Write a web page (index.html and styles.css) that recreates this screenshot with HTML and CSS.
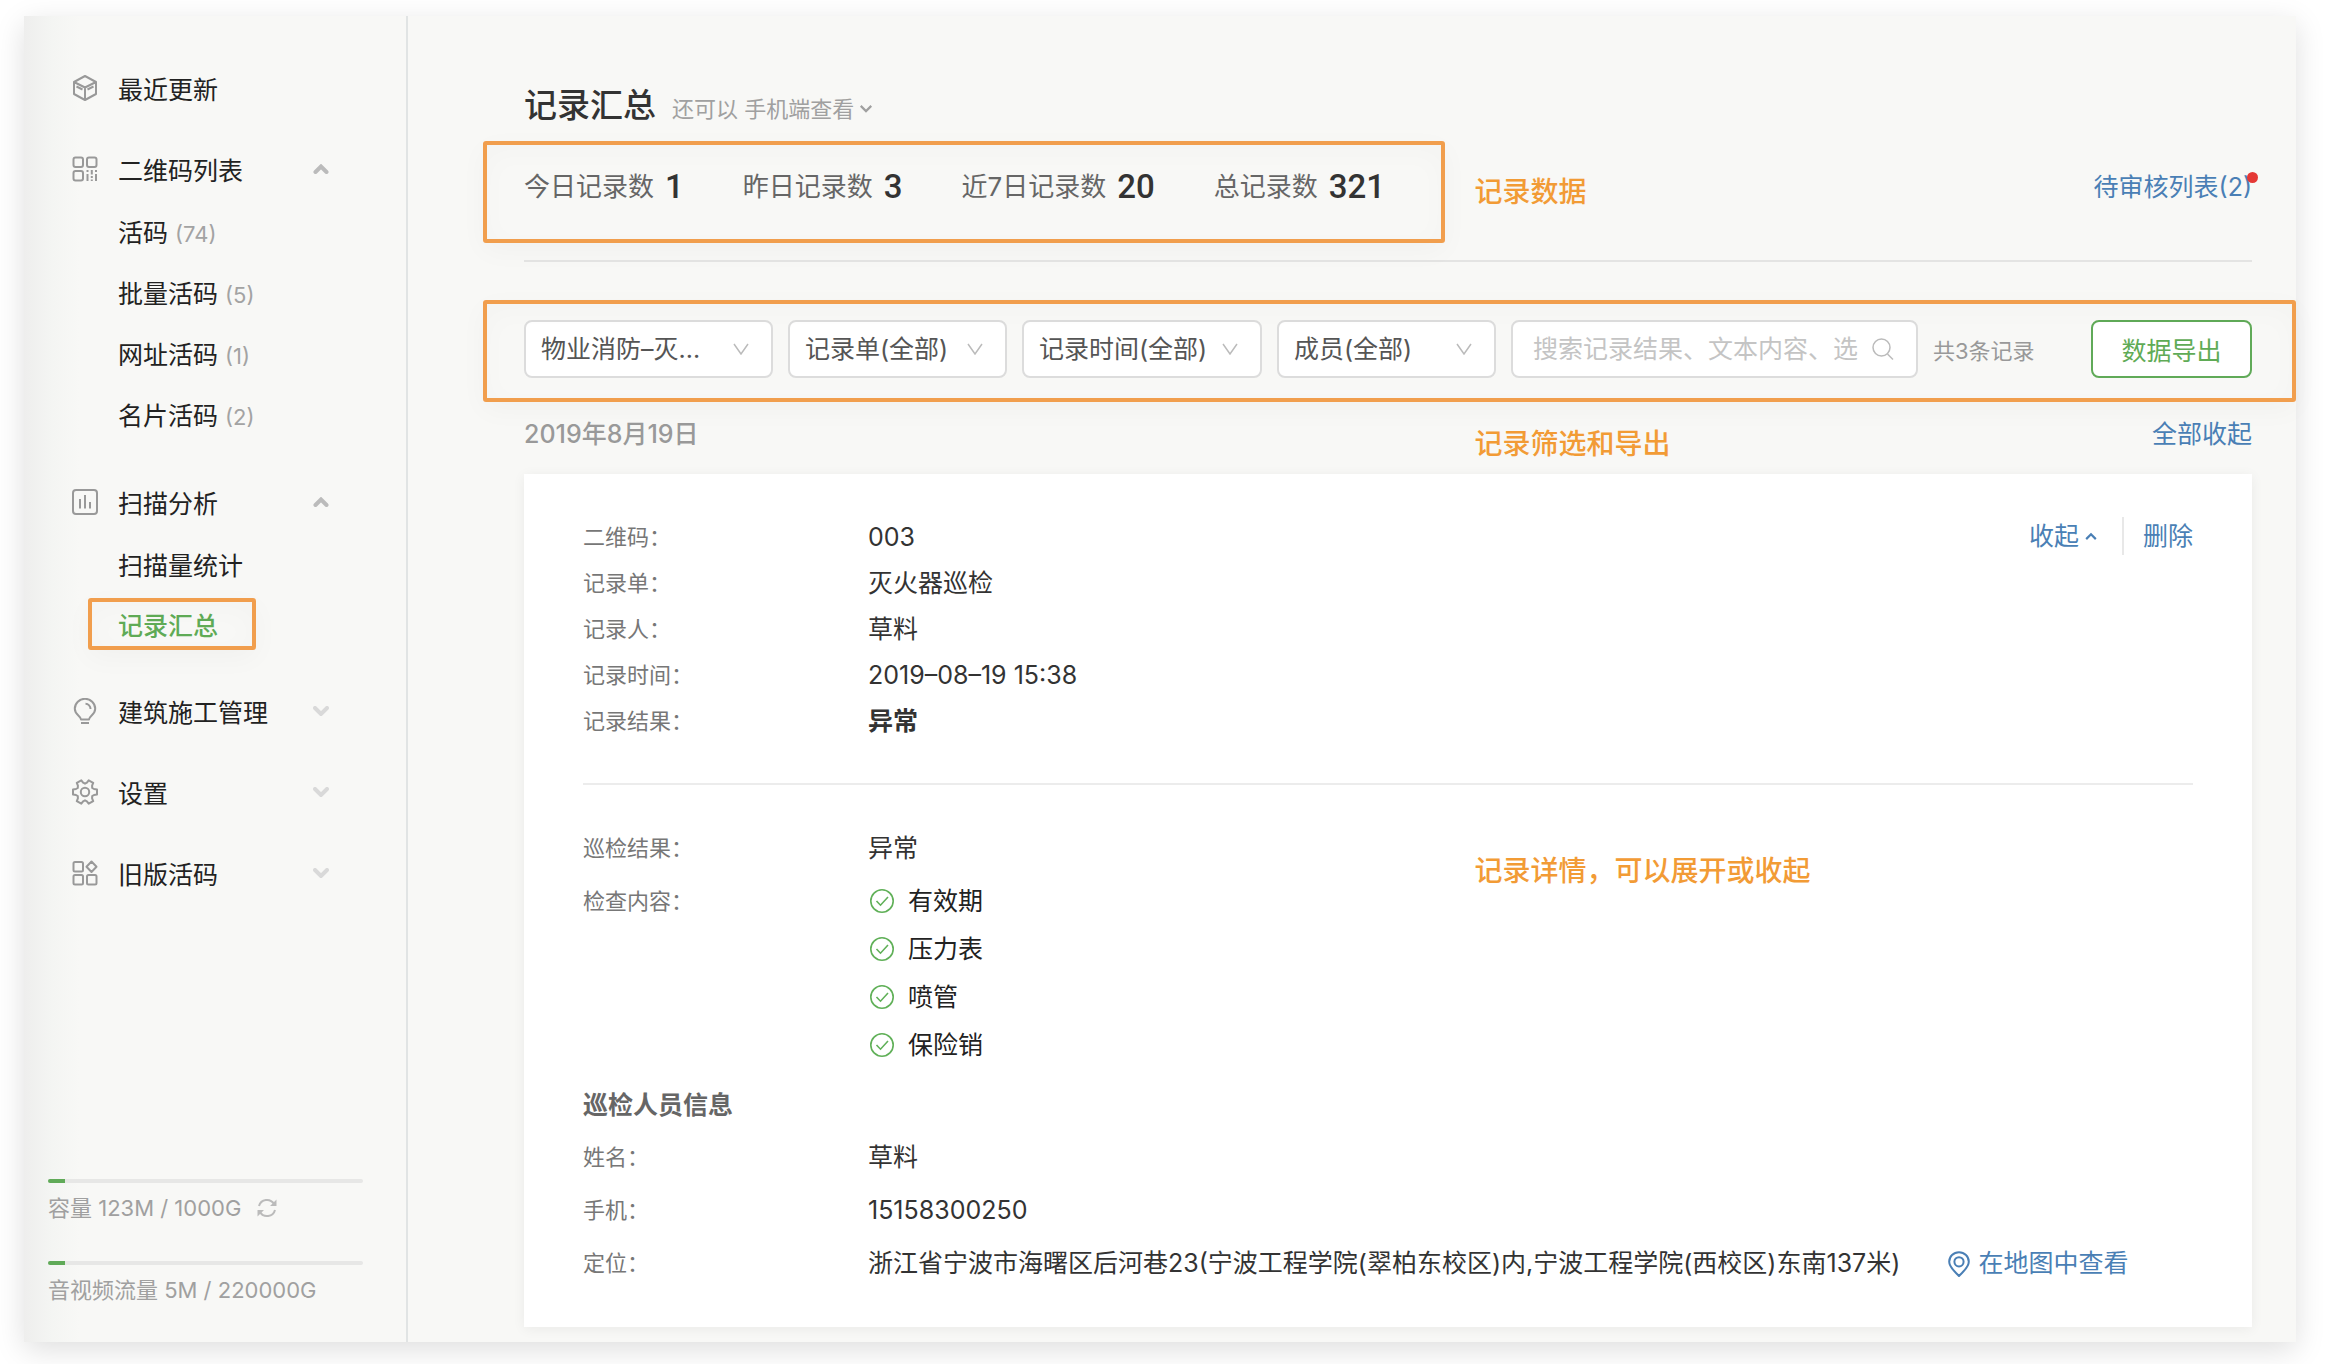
FILE: index.html
```html
<!DOCTYPE html>
<html lang="zh-CN">
<head>
    <meta charset="UTF-8">
    <meta name="viewport" content="width=device-width, initial-scale=1.0">
    <title>记录汇总</title>
    <link rel="stylesheet" href="styles.css">
</head>
<body>
<!-- 公用图标 -->
<svg class="sprite" aria-hidden="true">
    <symbol id="up" viewBox="0 0 16 10"><path d="M2.5 8L8 2.5L13.5 8"/></symbol>
    <symbol id="down" viewBox="0 0 16 10"><path d="M2 2L8 8L14 2"/></symbol>
    <symbol id="check" viewBox="0 0 24 24"><circle cx="12" cy="12" r="11.2"/><path d="M6.5 12L10.5 16.2L18 8"/></symbol>
</svg>

<div class="shell">
    <aside class="sidebar">
        <nav class="nav">
            <a class="nav-head" href="#">
                <svg class="nav-icon" viewBox="0 0 26 26"><path d="M13 1L24 7V19L13 25L2 19V7ZM2 7L13 12.5L24 7M13 12.5V25M4.5 11.5L10.5 14.5M15.5 14.5L21.5 11.5"/></svg>
                <span>最近更新</span>
            </a>
            <div>
                <a class="nav-head" href="#">
                    <svg class="nav-icon" viewBox="0 0 26 26"><rect x="1.5" y="1.5" width="9.5" height="9.5" rx="2"/><rect x="15" y="1.5" width="9.5" height="9.5" rx="2"/><rect x="1.5" y="15" width="9.5" height="9.5" rx="2"/><path d="M15.5 14V16M15.5 18V25M19.8 14V18.5M19.8 20V22M19.8 23.5V25M24 14V16M24 18V25"/></svg>
                    <span>二维码列表</span>
                    <svg class="arrow arrow-open"><use href="#up"/></svg>
                </a>
                <ul class="sub">
                    <li><a href="#">活码 <small>(74)</small></a></li>
                    <li><a href="#">批量活码 <small>(5)</small></a></li>
                    <li><a href="#">网址活码 <small>(1)</small></a></li>
                    <li><a href="#">名片活码 <small>(2)</small></a></li>
                </ul>
            </div>
            <div>
                <a class="nav-head" href="#">
                    <svg class="nav-icon" viewBox="0 0 26 26"><rect x="1" y="1" width="24" height="24" rx="3"/><path d="M8 10V19.5M13 6V19.5M18 13V19.5"/></svg>
                    <span>扫描分析</span>
                    <svg class="arrow arrow-open"><use href="#up"/></svg>
                </a>
                <ul class="sub">
                    <li><a href="#">扫描量统计</a></li>
                    <li class="current"><a href="#">记录汇总</a><i class="frame frame-nav"></i></li>
                </ul>
            </div>
            <a class="nav-head" href="#">
                <svg class="nav-icon" viewBox="0 0 26 26"><path d="M9 21.5C9 18 2.8 17 2.8 10.8A10.2 10 0 0 1 23.2 10.8C23.2 17 17 18 17 21.5ZM9 25H17M13.5 5.8A5 5 0 0 1 18.5 11"/></svg>
                <span>建筑施工管理</span>
                <svg class="arrow"><use href="#down"/></svg>
            </a>
            <a class="nav-head" href="#">
                <svg class="nav-icon" viewBox="-13 -13 26 26"><path d="M9 -3L12 -2.6V2.6L9 3L7.2 4.1L7.1 6.3L8.2 9.1L3.7 11.7L1.9 9.3L0 8.3L-1.9 9.3L-3.7 11.7L-8.2 9.1L-7.1 6.3L-7.2 4.1L-9 3L-12 2.6V-2.6L-9 -3L-7.2 -4.1L-7.1 -6.3L-8.2 -9.1L-3.7 -11.7L-1.9 -9.3L0 -8.3L1.9 -9.3L3.7 -11.7L8.2 -9.1L7.1 -6.3L7.2 -4.1Z"/><circle r="4.2"/></svg>
                <span>设置</span>
                <svg class="arrow"><use href="#down"/></svg>
            </a>
            <a class="nav-head" href="#">
                <svg class="nav-icon" viewBox="0 0 26 26"><rect x="1.5" y="2" width="9.5" height="9.5" rx="1.5"/><rect x="1.5" y="15" width="9.5" height="9.5" rx="1.5"/><rect x="15" y="15" width="9.5" height="9.5" rx="1.5"/><path d="M19.5 1.5L24.5 6.7L19.5 12L14.5 6.7Z"/></svg>
                <span>旧版活码</span>
                <svg class="arrow"><use href="#down"/></svg>
            </a>
        </nav>

        <div class="usage">
            <div>
                <div class="bar"><div class="bar-fill" style="width: 5.4%"></div></div>
                <p>容量 123M / 1000G
                    <button class="refresh" aria-label="刷新"><svg viewBox="0 0 20 20"><path d="M2 8A8.2 8.2 0 0 1 17 6M18 12A8.2 8.2 0 0 1 3 14"/><path class="tip" d="M19.5 1.5V8H13ZM.5 18.5V12H7Z"/></svg></button>
                </p>
            </div>
            <div>
                <div class="bar"><div class="bar-fill" style="width: 5.4%"></div></div>
                <p>音视频流量 5M / 220000G</p>
            </div>
        </div>
    </aside>

    <main class="main">
        <div class="title">
            <h1>记录汇总</h1>
            <a href="#">还可以 手机端查看<svg class="caret"><use href="#down"/></svg></a>
        </div>

        <div class="summary">
            <dl class="stats">
                <div><dt>今日记录数</dt><dd>1</dd></div>
                <div><dt>昨日记录数</dt><dd>3</dd></div>
                <div><dt>近7日记录数</dt><dd>20</dd></div>
                <div><dt>总记录数</dt><dd>321</dd></div>
                <i class="frame frame-stats"></i>
            </dl>
            <span class="note">记录数据</span>
            <a class="pending" href="#">待审核列表(2)</a>
        </div>

        <form class="filters">
            <select class="select-code" aria-label="二维码"><option>物业消防–灭...</option></select>
            <select class="select-form" aria-label="记录单"><option>记录单(全部)</option></select>
            <select class="select-time" aria-label="记录时间"><option>记录时间(全部)</option></select>
            <select class="select-member" aria-label="成员"><option>成员(全部)</option></select>
            <label class="search">
                <input type="text" placeholder="搜索记录结果、文本内容、选" aria-label="搜索">
                <svg viewBox="0 0 22 24"><circle cx="9.5" cy="10.5" r="8.5"/><path d="M15.5 17L21 22.5"/></svg>
            </label>
            <span class="count">共3条记录</span>
            <button class="export" type="button">数据导出</button>
            <i class="frame frame-filters"></i>
        </form>

        <div class="day">
            <h2>2019年8月19日</h2>
            <span class="note note-filter">记录筛选和导出</span>
            <a href="#">全部收起</a>
        </div>

        <section class="card">
            <div class="actions">
                <a href="#">收起<svg class="caret"><use href="#up"/></svg></a>
                <a class="delete" href="#">删除</a>
            </div>
            <dl class="info">
                <div><dt>二维码：</dt><dd>003</dd></div>
                <div><dt>记录单：</dt><dd>灭火器巡检</dd></div>
                <div><dt>记录人：</dt><dd>草料</dd></div>
                <div><dt>记录时间：</dt><dd>2019–08–19 15:38</dd></div>
                <div><dt>记录结果：</dt><dd><b>异常</b></dd></div>
            </dl>
            <div class="detail">
                <dl class="info info-loose">
                    <div><dt>巡检结果：</dt><dd>异常</dd></div>
                    <div>
                        <dt>检查内容：</dt>
                        <dd>
                            <ul class="checks">
                                <li><svg><use href="#check"/></svg>有效期</li>
                                <li><svg><use href="#check"/></svg>压力表</li>
                                <li><svg><use href="#check"/></svg>喷管</li>
                                <li><svg><use href="#check"/></svg>保险销</li>
                            </ul>
                        </dd>
                    </div>
                </dl>
                <h3>巡检人员信息</h3>
                <dl class="info info-loose">
                    <div><dt>姓名：</dt><dd>草料</dd></div>
                    <div><dt>手机：</dt><dd>15158300250</dd></div>
                    <div>
                        <dt>定位：</dt>
                        <dd class="place">浙江省宁波市海曙区后河巷23(宁波工程学院(翠柏东校区)内,宁波工程学院(西校区)东南137米)
                            <a href="#"><svg viewBox="0 0 22 26"><path d="M11 1.2C5.5 1.2 1.2 5.5 1.2 10.7C1.2 16.5 7 20.5 11 25C15 20.5 20.8 16.5 20.8 10.7C20.8 5.5 16.5 1.2 11 1.2Z"/><circle cx="11" cy="10.8" r="4.6"/></svg>在地图中查看</a>
                        </dd>
                    </div>
                </dl>
                <span class="note note-detail">记录详情，可以展开或收起</span>
            </div>
        </section>
    </main>
</div>
</body>
</html>
```
FILE: styles.css
```css
* {
    box-sizing: border-box;
}
body {
    display: flex;
    min-height: 100vh;
    margin: 0;
    padding: 16px 32px 23px 24px;
    background: #fff;
    color: #333;
    font-family: Inter, "Noto Sans CJK SC", sans-serif;
    font-size: 25px;
}
h1, h2, h3, p, ul, dl, dd {
    margin: 0;
    padding: 0;
}
ul {
    list-style: none;
}
a {
    color: #4a7fb5;
    text-decoration: none;
}
button, input, select {
    font-family: inherit;
    font-size: 25px;
}
svg {
    flex: none;
    fill: none;
    stroke: currentColor;
    stroke-width: 2;
}
.sprite {
    position: absolute;
    width: 0;
    height: 0;
}
.shell {
    display: flex;
    flex: 1;
    background: #f8f8f6;
    box-shadow: 0 8px 28px rgba(0, 0, 0, 0.13);
}

/* 左侧菜单 */
.sidebar {
    display: flex;
    flex-direction: column;
    flex: none;
    width: 384px;
    padding: 51px 43px 35px 24px;
    border-right: 2px solid #e1e4e4;
    background: linear-gradient(to right, #eeeeed, #f4f5f3 28px, #f8f8f6 56px);
}
.nav {
    display: flex;
    flex-direction: column;
    gap: 40px;
    padding: 0 34px 0 24px;
}
.nav-head {
    display: flex;
    align-items: center;
    height: 41px;
    color: #222;
}
.nav-icon {
    width: 26px;
    height: 26px;
    margin-right: 20px;
    color: #999;
    stroke-linejoin: round;
}
.arrow {
    width: 16px;
    height: 10px;
    margin-left: auto;
    color: #d9d9d9;
    stroke-width: 4;
    stroke-linecap: round;
}
.arrow-open {
    color: #bbb;
}
.sub {
    display: grid;
    gap: 12px;
    margin-top: 20px;
    padding-left: 46px;
}
.sub li {
    position: relative;
    line-height: 48px;
}
.sub a {
    color: #222;
}
.sub small {
    color: #a3a3a3;
    font-size: 22px;
}
.sub .current a {
    color: #5fab56;
    font-weight: 500;
}
.usage {
    display: grid;
    gap: 36px;
    margin-top: auto;
    color: #a0a0a0;
    font-size: 22px;
}
.usage p {
    display: flex;
    align-items: center;
    gap: 16px;
    margin-top: 8px;
    line-height: 34px;
}
.bar {
    height: 4px;
    overflow: hidden;
    border-radius: 2px;
    background: #e7e7e6;
}
.bar-fill {
    height: 4px;
    background: #60aa58;
}
.refresh {
    display: flex;
    padding: 0;
    border: 0;
    background: none;
    color: #bbb;
}
.refresh svg {
    width: 20px;
    height: 20px;
}
.refresh .tip {
    fill: currentColor;
    stroke: none;
}

/* 标注框和说明文字 */
.frame {
    position: absolute;
    border: 4px solid #f19e4d;
    border-radius: 3px;
    box-shadow: 0 8px 28px rgba(0, 0, 0, 0.03), inset 0 8px 28px rgba(0, 0, 0, 0.02);
    pointer-events: none;
}
.frame-nav {
    top: -4px;
    bottom: 0;
    left: -30px;
    width: 168px;
}
.frame-stats {
    inset: -21px -60px -31px -41px;
}
.frame-filters {
    inset: -20px -44px -24px -41px;
}
.note {
    position: absolute;
    left: 55%;
    color: #f29b35;
    font-size: 28px;
    font-weight: 500;
    line-height: 40px;
}

/* 右侧内容 */
.main {
    flex: 1;
    min-width: 0;
    padding: 65px 44px 15px 116px;
}
.title {
    display: flex;
    align-items: baseline;
    gap: 16px;
    line-height: 48px;
}
.title h1 {
    font-size: 33px;
    font-weight: 500;
}
.title a {
    color: #a0a0a0;
    font-size: 22px;
}
.caret {
    width: 14px;
    height: 9px;
    margin-left: 5px;
    vertical-align: 4px;
    stroke-width: 2.5;
}
.summary {
    position: relative;
    display: flex;
    justify-content: space-between;
    margin-top: 29px;
    padding-bottom: 48px;
    border-bottom: 2px solid #e4e4e3;
    line-height: 50px;
}
.summary .note {
    top: 10px;
}
.stats {
    position: relative;
    display: flex;
    gap: 59px;
}
.stats div {
    display: flex;
    gap: 11px;
}
.stats dt {
    color: #666;
    font-size: 26px;
}
.stats dd {
    font-family: Roboto, sans-serif;
    font-size: 33px;
    font-weight: 500;
}
.pending {
    position: relative;
}
.pending::after {
    content: "";
    position: absolute;
    top: 10px;
    right: -6px;
    width: 11px;
    height: 11px;
    border-radius: 50%;
    background: #e53935;
}
.filters {
    position: relative;
    display: flex;
    align-items: center;
    gap: 15px;
    margin-top: 58px;
}
.filters select, .search, .export {
    height: 58px;
    border: 2px solid #dcdcdc;
    border-radius: 8px;
    background-color: #fff;
}
.filters select {
    flex: none;
    appearance: none;
    padding: 0 44px 0 15px;
    background-image: url("data:image/svg+xml,%3Csvg xmlns='http://www.w3.org/2000/svg' width='16' height='12'%3E%3Cpath d='M1 1L8 11L15 1' fill='none' stroke='%23bbb' stroke-width='1.5'/%3E%3C/svg%3E");
    background-repeat: no-repeat;
    background-position: right 22px center;
    color: #555;
}
.filters .select-code {
    width: 249px;
}
.filters .select-form, .filters .select-member {
    width: 219px;
}
.filters .select-time {
    width: 240px;
}
.search {
    display: flex;
    align-items: center;
    gap: 10px;
    flex: 0 1 407px;
    min-width: 0;
    padding: 0 22px 0 20px;
    color: #bbb;
}
.search input {
    flex: 1;
    min-width: 0;
    padding: 0;
    border: 0;
    outline: 0;
    background: none;
}
.search input::placeholder {
    color: #c4c4c4;
}
.search svg {
    width: 22px;
    height: 24px;
    stroke-width: 1.5;
}
.count {
    color: #999;
    font-size: 22px;
    white-space: nowrap;
}
.export {
    flex: none;
    width: 161px;
    margin-left: auto;
    border-color: #60aa58;
    color: #5fab56;
}
.day {
    position: relative;
    display: flex;
    justify-content: space-between;
    margin: 36px 0 20px;
    line-height: 40px;
}
.day h2 {
    color: #999;
    font-size: 25px;
    font-weight: 500;
}
.note-filter {
    top: 10px;
}

/* 记录卡片 */
.card {
    position: relative;
    padding: 40px 59px 37px;
    background: #fff;
    box-shadow: 0 2px 12px rgba(0, 0, 0, 0.06);
}
.actions {
    position: absolute;
    top: 43px;
    right: 59px;
    display: flex;
    line-height: 38px;
}
.delete {
    margin-left: 24px;
    padding-left: 19px;
    border-left: 2px solid #e8e8e8;
}
.info div {
    display: flex;
    line-height: 46px;
}
.info dt {
    flex: none;
    width: 285px;
    color: #777;
    font-size: 22px;
}
.info-loose > div {
    line-height: 53px;
}
.detail {
    position: relative;
    margin-top: 39px;
    padding-top: 37px;
    border-top: 2px solid #ececec;
}
.checks {
    padding: 2px 0 10px;
}
.checks li {
    display: flex;
    align-items: center;
    gap: 14px;
    padding-left: 2px;
    color: #222;
    line-height: 48px;
}
.checks svg {
    width: 24px;
    height: 24px;
    color: #60b058;
    stroke-width: 1.6;
}
.detail h3 {
    color: #666;
    font-size: 25px;
    font-weight: 600;
    line-height: 52px;
}
.place {
    display: flex;
    gap: 48px;
}
.place a {
    display: flex;
    align-items: center;
    gap: 8px;
}
.place svg {
    width: 22px;
    height: 26px;
}
/* 和上面两处说明左对齐 */
.note-detail {
    top: 66px;
    left: calc(55% + 6px);
}
```
